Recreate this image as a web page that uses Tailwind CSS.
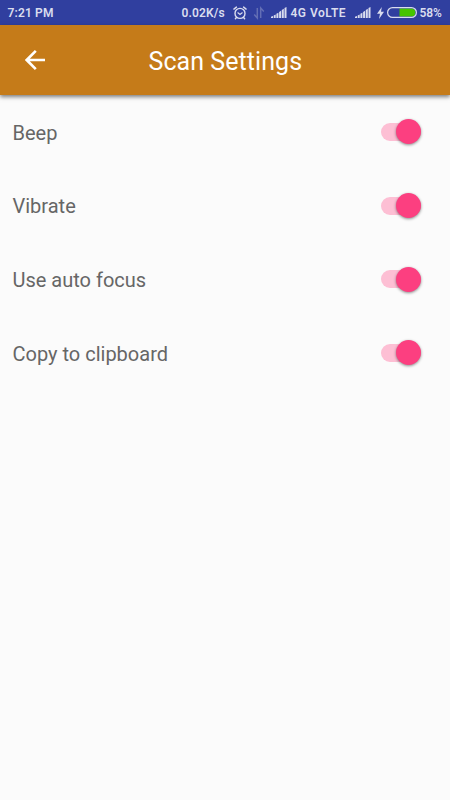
<!DOCTYPE html>
<html lang="en">
<head>
  <meta charset="UTF-8" />
  <meta name="viewport" content="width=device-width, initial-scale=1.0" />
  <title>Scan Settings</title>
  <script src="https://cdn.jsdelivr.net/npm/@tailwindcss/browser@4"></script>
</head>
<body class="bg-[#fbfbfb] h-screen overflow-hidden font-['Roboto',sans-serif]">

  <!-- Status bar -->
  <div class="h-[25px] bg-[#303f9f] flex items-center pl-[7.5px] text-[12px] leading-none font-semibold text-[#d9dcee] whitespace-nowrap">
    <span class="w-[174px] tracking-[0.15px]">7:21 PM</span>
    <span class="w-[51px] tracking-[0.15px]">0.02K/s</span>
    <svg class="w-[14px] h-[14px] shrink-0" viewBox="0 0 14 14" fill="none" stroke="currentColor" stroke-width="1.4" stroke-linecap="round">
      <circle cx="7" cy="7.4" r="5" />
      <path d="M4.9 6.8L7 8.4L9.2 6.8" stroke-width="1.2" />
      <path d="M.9 3.1L3.4 1.1M13.1 3.1L10.6 1.1M3.4 11.5L2.4 12.8M10.6 11.5L11.6 12.8" />
    </svg>
    <svg class="w-3 h-[14px] ml-[6px] shrink-0 text-[#636eb5]" viewBox="0 0 12 14" fill="none" stroke="currentColor" stroke-width="1.5">
      <path d="M4.3 2V12L1.2 8.6M7.7 12V2L10.8 5.4" />
    </svg>
    <svg class="w-4 h-3 ml-[6px] shrink-0" viewBox="0 0 16 12" fill="currentColor">
      <path d="M0 9.7L2 9V11H0zM2.7 8.5L4.7 7.5V11H2.7zM5.4 6.8L7.4 5.7V11H5.4zM8.1 5L10.1 3.7V11H8.1zM10.8 3L12.8 1.7V11H10.8zM13.5 1L15.5 0V11H13.5z" />
    </svg>
    <span class="ml-[4px] w-[64px] tracking-[0.5px]">4G VoLTE</span>
    <svg class="w-4 h-3 shrink-0" viewBox="0 0 16 12" fill="currentColor">
      <path d="M0 9.7L2 9V11H0zM2.7 8.5L4.7 7.5V11H2.7zM5.4 6.8L7.4 5.7V11H5.4zM8.1 5L10.1 3.7V11H8.1zM10.8 3L12.8 1.7V11H10.8zM13.5 1L15.5 0V11H13.5z" />
    </svg>
    <svg class="w-[7px] h-3 ml-[6px] shrink-0" viewBox="0 0 7 12" fill="currentColor">
      <path d="M4.8 0L0 6.8H3L2 12L7 4.8H4z" />
    </svg>
    <svg class="w-[30px] h-[11px] ml-[3px] shrink-0" viewBox="0 0 30 11" fill="none">
      <path d="M12.5 1.5H24.3a4 4 0 0 1 0 8H12.5z" fill="#45c400" />
      <rect x=".6" y=".6" width="28.8" height="9.8" rx="4.9" stroke="currentColor" stroke-width="1.2" />
    </svg>
    <span class="ml-[3px] tracking-[-0.1px]">58%</span>
  </div>

  <!-- Toolbar -->
  <header class="relative h-[70px] bg-[#c57b19] flex items-center shadow-[0_2px_4px_rgba(0,0,0,0.5)]">
    <svg class="w-5 h-5 ml-[25px]" viewBox="0 0 20 20" fill="none" stroke="white" stroke-width="2.6">
      <path d="M20 10H2M10.8.9L1.7 10L10.8 19.1" />
    </svg>
    <h1 class="ml-[103.5px] mt-[3px] text-[25px] leading-[30px] tracking-[0.06px] text-white whitespace-nowrap">Scan Settings</h1>
  </header>

  <!-- Settings -->
  <main class="text-[20px] text-[#666666]">
    <div class="h-[73.7px] flex items-center justify-between pl-[12.5px] pr-[29px]">
      <span class="pt-[1.5px]">Beep</span>
      <div class="w-10 h-[18px] flex items-center justify-end rounded-full bg-[#fdbfd4]">
        <div class="w-[25px] h-[25px] shrink-0 rounded-full bg-[#fc3f80] shadow-[0_1px_3px_rgba(0,0,0,0.45)]"></div>
      </div>
    </div>
    <div class="h-[73.7px] flex items-center justify-between pl-[12.5px] pr-[29px]">
      <span class="pt-[1px]">Vibrate</span>
      <div class="w-10 h-[18px] flex items-center justify-end rounded-full bg-[#fdbfd4]">
        <div class="w-[25px] h-[25px] shrink-0 rounded-full bg-[#fc3f80] shadow-[0_1px_3px_rgba(0,0,0,0.45)]"></div>
      </div>
    </div>
    <div class="h-[73.7px] flex items-center justify-between pl-[12.5px] pr-[29px]">
      <span class="pt-0.5">Use auto focus</span>
      <div class="w-10 h-[18px] flex items-center justify-end rounded-full bg-[#fdbfd4]">
        <div class="w-[25px] h-[25px] shrink-0 rounded-full bg-[#fc3f80] shadow-[0_1px_3px_rgba(0,0,0,0.45)]"></div>
      </div>
    </div>
    <div class="h-[73.7px] flex items-center justify-between pl-[12.5px] pr-[29px]">
      <span class="pt-0.5">Copy to clipboard</span>
      <div class="w-10 h-[18px] flex items-center justify-end rounded-full bg-[#fdbfd4]">
        <div class="w-[25px] h-[25px] shrink-0 rounded-full bg-[#fc3f80] shadow-[0_1px_3px_rgba(0,0,0,0.45)]"></div>
      </div>
    </div>
  </main>

</body>
</html>
